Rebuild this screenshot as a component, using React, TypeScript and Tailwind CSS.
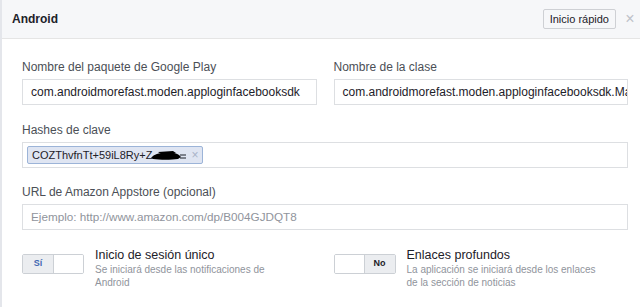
import { useState } from "react";

// FIELD PIECES

function Label({ children }: { children: React.ReactNode }) {
  return <div className="text-[12px] leading-4 text-[#4b4f56] mb-[4px]">{children}</div>;
}

function TextBox({ value, placeholder }: { value?: string; placeholder?: string }) {
  return (
    <div className="h-[26px] border border-[#dddfe2] bg-white px-[8px] flex items-center overflow-hidden whitespace-nowrap text-[12px]">
      {value ? (
        <span className="text-[#1d2129]">{value}</span>
      ) : (
        <span className="text-[#90949c] text-[11.7px]">{placeholder}</span>
      )}
    </div>
  );
}

function Toggle({ on }: { on: boolean }) {
  return (
    <div className="flex w-[62px] h-[20px] border border-[#ccd0d5] rounded-[2px] overflow-hidden shrink-0 text-[9px] font-bold">
      {on ? (
        <>
          <div className="w-[31px] bg-[#ebedf0] border-r border-[#ccd0d5] flex items-center justify-center text-[#4267b2]">Sí</div>
          <div className="flex-1 bg-white" />
        </>
      ) : (
        <>
          <div className="flex-1 bg-white" />
          <div className="w-[31px] bg-[#ebedf0] border-l border-[#ccd0d5] flex items-center justify-center text-[#1d2129]">No</div>
        </>
      )}
    </div>
  );
}

function ToggleRow({ on, title, desc }: { on: boolean; title: string; desc: string }) {
  return (
    <div className="flex items-start gap-[11px]">
      <Toggle on={on} />
      <div className="-mt-[7px]">
        <div className="text-[12.5px] leading-[16px] text-[#1d2129]">{title}</div>
        <div className="text-[10px] leading-[13px] text-[#90949c] w-[200px]">{desc}</div>
      </div>
    </div>
  );
}

// MAIN

export default function App() {
  const [hashes] = useState(["COZThvfnTt+59iL8Ry+Z"]);

  return (
    <div
      className="w-[640px] h-[307px] bg-white border-l-[2px] border-[#e4e6eb] overflow-hidden"
      style={{ fontFamily: '"Liberation Sans", Arial, sans-serif' }}
    >
      {/* HEADER */}
      <div className="h-[39px] bg-[#f6f7f9] border-b border-[#e5e5e5] flex items-center pl-[10px] pr-[4px]">
        <span className="text-[12px] font-bold text-[#1d2129]">Android</span>
        <div className="ml-auto flex items-center gap-[8px]">
          <button className="h-[20px] px-[6px] bg-[#f6f7f9] border border-[#ced0d4] rounded-[2px] text-[11px] text-[#1d2129]">
            Inicio rápido
          </button>
          <span className="text-[16px] leading-none text-[#bec2c9] w-[12px] text-center">×</span>
        </div>
      </div>

      {/* BODY */}
      <div className="pl-[20px] pr-[12px] pt-[20px]">
        <div className="grid grid-cols-2 gap-[17px]">
          <div>
            <Label>Nombre del paquete de Google Play</Label>
            <TextBox value="com.androidmorefast.moden.apploginfacebooksdk" />
          </div>
          <div>
            <Label>Nombre de la clase</Label>
            <TextBox value="com.androidmorefast.moden.apploginfacebooksdk.MainActivity" />
          </div>
        </div>

        <div className="mt-[17px]">
          <Label>Hashes de clave</Label>
          <div className="h-[26px] border border-[#dddfe2] bg-white px-[4px] flex items-center">
            {hashes.map((h) => (
              <div
                key={h}
                className="h-[18px] flex items-center bg-[#dfe5f2] border border-[#9cb4d8] rounded-[2px] pl-[4px] pr-[4px] text-[11px] text-[#1d2129]"
              >
                <span>{h}</span>
                <svg width="38" height="12" viewBox="0 0 38 12" className="-ml-[2px]">
                  <path d="M1 9 C4 5 9 4 15 4 C22 3 26 4 29 6 L31 8 L28 10 C21 11 10 11 3 10 Z" fill="#000" />
                  <path d="M8 3 L23 2 L26 4 L11 5 Z" fill="#000" />
                  <path d="M30 6 L36 6 M30 9 L36 9" stroke="#1d2129" strokeWidth="1" />
                </svg>
                <span className="ml-[3px] text-[12px] leading-none text-[#a8b3c8]">×</span>
              </div>
            ))}
          </div>
        </div>

        <div className="mt-[16px]">
          <Label>URL de Amazon Appstore (opcional)</Label>
          <TextBox placeholder="Ejemplo: http://www.amazon.com/dp/B004GJDQT8" />
        </div>

        <div className="grid grid-cols-2 gap-[17px] mt-[24px]">
          <ToggleRow on title="Inicio de sesión único" desc="Se iniciará desde las notificaciones de Android" />
          <ToggleRow on={false} title="Enlaces profundos" desc="La aplicación se iniciará desde los enlaces de la sección de noticias" />
        </div>
      </div>
    </div>
  );
}
